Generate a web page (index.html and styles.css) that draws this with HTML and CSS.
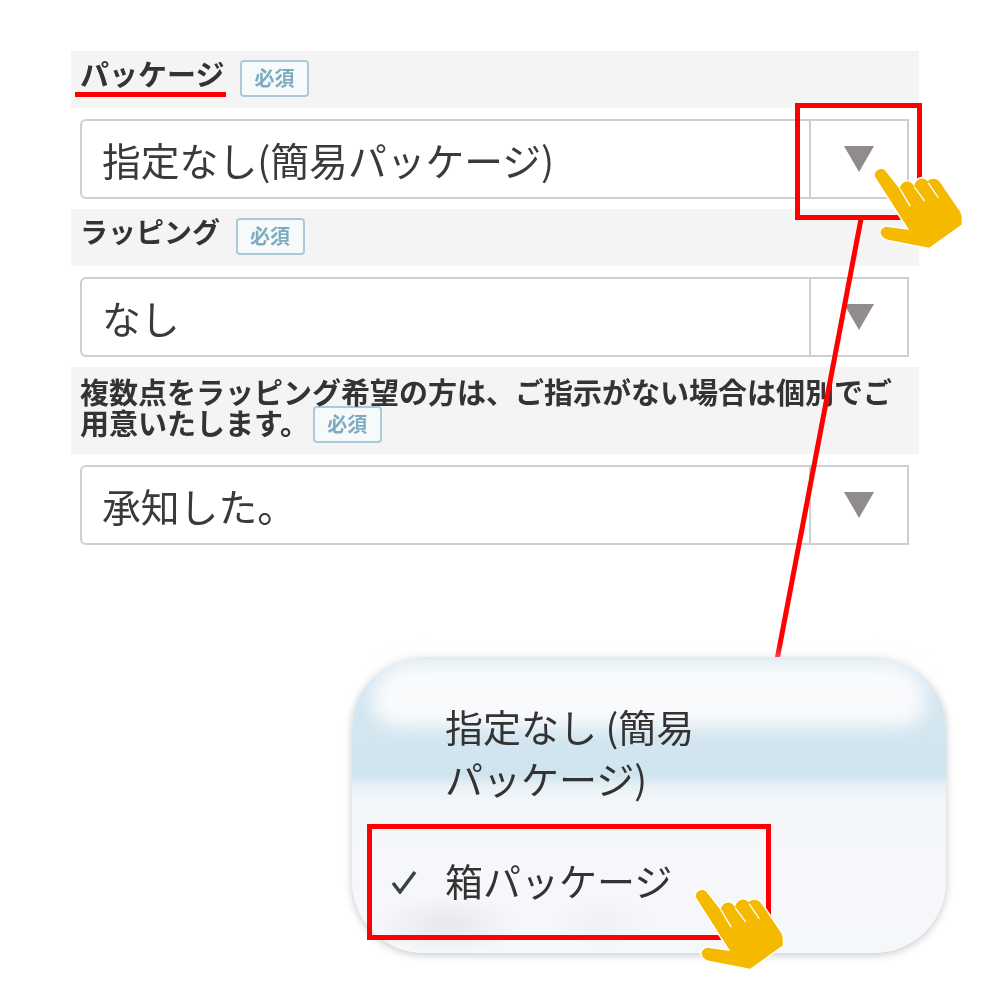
FILE: index.html
```html
<!DOCTYPE html>
<html lang="ja">
<head>
    <meta charset="UTF-8">
    <title>パッケージ選択</title>
    <link rel="stylesheet" href="styles.css">
</head>
<body>
    <div class="page">
        <svg width="0" height="0" class="defs">
            <symbol id="hand" viewBox="276 226 284 262">
                <path class="hand-body" d="M288 262C280 245 305 230 318 243L362 300C362 280 385 268 398 282L405 290C408 268 432 258 445 275C452 268 470 262 482 277L540 362C548 372 549 385 548 405L450 475L330 452C300 445 295 420 320 412L390 422Z"/>
                <path class="hand-gap" d="M362 298L393 350M405 292L437 335M447 280L478 325"/>
            </symbol>
        </svg>

        <div class="form">
            <div class="band">
                <span class="label label-main">パッケージ</span>
                <span class="badge">必須</span>
            </div>
            <div class="select">
                <div class="select-value">指定なし(簡易パッケージ)</div>
                <div class="select-arrow"><span class="arrow"></span></div>
            </div>

            <div class="band">
                <span class="label label-small">ラッピング</span>
                <span class="badge">必須</span>
            </div>
            <div class="select">
                <div class="select-value">なし</div>
                <div class="select-arrow"><span class="arrow"></span></div>
            </div>

            <div class="band band-tall">
                <span class="label">複数点をラッピング希望の方は、ご指示がない場合は個別でご用意いたします。</span>
                <span class="badge">必須</span>
            </div>
            <div class="select">
                <div class="select-value">承知した。</div>
                <div class="select-arrow"><span class="arrow"></span></div>
            </div>
        </div>

        <!-- red callout over the first select -->
        <svg class="callout" width="1000" height="1002" viewBox="0 0 1000 1002">
            <rect class="callout-box" x="797.5" y="105.5" width="122" height="112"/>
            <line class="callout-line" x1="861" y1="219" x2="777" y2="660"/>
        </svg>

        <div class="popup">
            <div class="popup-item">指定なし (簡易<br>パッケージ)</div>
            <div class="popup-item popup-selected">
                <svg class="check" width="26" height="24" viewBox="0 0 26 24"><path d="M2 13L9 22L24 2"/></svg>
                箱パッケージ
            </div>
        </div>

        <svg class="hand hand-top"><use href="#hand"/></svg>
        <svg class="hand hand-bottom"><use href="#hand"/></svg>
    </div>
</body>
</html>
```

FILE: styles.css
```css
body {
    margin: 0;
    background: white;
    font-family: "Noto Sans CJK JP", "Noto Sans", sans-serif;
    color: #333;
}
.page {
    position: relative;
    width: 1000px;
    height: 1002px;
    overflow: hidden;
}
.defs {
    position: absolute;
}
.form {
    display: flex;
    flex-direction: column;
    width: 848px;
    margin-left: 71px;
    padding-top: 51px;
    filter: blur(0.4px);
}
.band {
    box-sizing: border-box;
    height: 57px;
    padding: 9px 9px 0;
    background: #f4f4f4;
}
.band-tall {
    height: 87px;
    padding-top: 11px;
}
.label {
    position: relative;
    font-size: 29px;
    line-height: 27px;
    font-weight: 700;
    color: #333;
}
.label-small {
    font-size: 28px;
}
.label-main::after {
    content: "";
    position: absolute;
    left: -5px;
    right: -2px;
    top: 40px;
    height: 5px;
    background: #f00;
}
.badge {
    display: inline-block;
    box-sizing: border-box;
    width: 69px;
    height: 37px;
    margin-left: 12px;
    border: 2px solid #a9cbd9;
    border-radius: 4px;
    background: #f7fafb;
    color: #7fabc1;
    font-size: 20px;
    line-height: 31px;
    font-weight: 700;
    text-align: center;
    vertical-align: top;
}
.band-tall .badge {
    margin-left: 0;
    vertical-align: 3px;
    margin-top: -12px;
}
.select {
    display: flex;
    box-sizing: border-box;
    width: 829px;
    height: 80px;
    margin: 11px 0 10px 9px;
    border: 2px solid #cfcfcf;
    border-radius: 6px 0 0 6px;
    background: white;
}
.select-value {
    flex: 1;
    padding-left: 20px;
    font-size: 38.8px;
    line-height: 76px;
    color: #3a3a3a;
}
.select-arrow {
    display: flex;
    align-items: center;
    justify-content: center;
    width: 96px;
    border-left: 2px solid #cfcfcf;
}
.arrow {
    width: 0;
    height: 0;
    border-left: 15px solid transparent;
    border-right: 15px solid transparent;
    border-top: 26px solid #918b8b;
}
.callout {
    position: absolute;
    left: 0;
    top: 0;
}
.callout-box {
    fill: none;
    stroke: #f00;
    stroke-width: 5;
}
.callout-line {
    stroke: #f00;
    stroke-width: 5;
}
.popup {
    position: absolute;
    left: 352px;
    top: 657px;
    box-sizing: border-box;
    width: 594px;
    height: 296px;
    padding-top: 43px;
    border-radius: 72px;
    box-shadow: 0 2px 8px rgba(0, 0, 0, 0.22);
    background:
        radial-gradient(ellipse 70px 30px at 95px 268px, rgba(120, 120, 120, 0.12), transparent),
        radial-gradient(ellipse 50px 24px at 250px 265px, rgba(120, 120, 120, 0.05), transparent),
        linear-gradient(to bottom, #d6e7f1 0, #d2e5f0 85px, #d0e4f0 118px, #e9f1f6 130px, #f3f6f9 142px, #f5f7fa 190px, #f5f8fa 100%);
}
.popup::before {
    content: "";
    position: absolute;
    left: 20px;
    right: 20px;
    top: 4px;
    height: 66px;
    border-radius: 50px 50px 30px 30px;
    background: #f9fafc;
    filter: blur(9px);
}
.popup-item {
    position: relative;
    padding-left: 93px;
    font-size: 38px;
    line-height: 52px;
    color: #333;
    filter: blur(0.3px);
}
.popup-selected {
    box-sizing: border-box;
    width: 404px;
    height: 116px;
    margin: 20px 0 0 15px;
    padding-left: 73px;
    border: 5px solid #f00;
    line-height: 102px;
}
.check {
    position: absolute;
    left: 19px;
    top: 41px;
}
.check path {
    fill: none;
    stroke: #3a4046;
    stroke-width: 3.5;
}
.hand {
    position: absolute;
    width: 95px;
    height: 87px;
}
.hand-top {
    left: 871px;
    top: 165px;
}
.hand-bottom {
    left: 692px;
    top: 886px;
}
.hand-body {
    fill: #f5b900;
    stroke: white;
    stroke-width: 9;
    paint-order: stroke;
    stroke-linejoin: round;
}
.hand-gap {
    fill: none;
    stroke: white;
    stroke-width: 4;
}
```
